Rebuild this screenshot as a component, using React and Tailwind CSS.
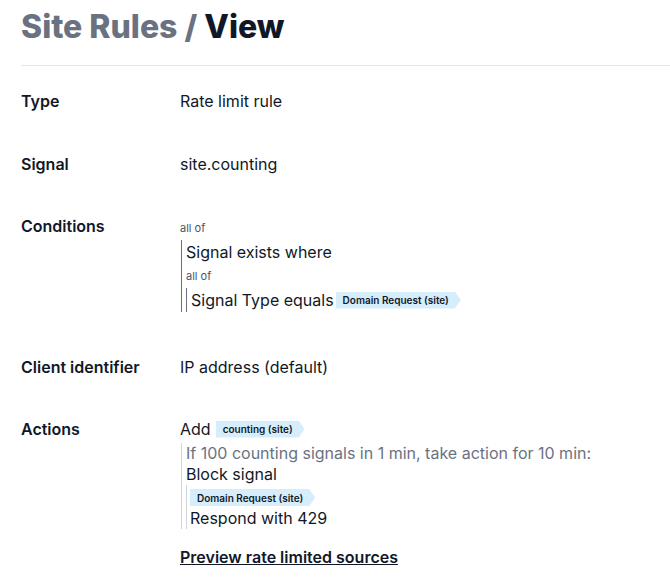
import React from 'react';

const Tag = ({ children }) => (
    <span className="inline-flex items-center h-[17px] pl-[7px] pr-[12px] bg-[#d6eefb] text-[10px] font-semibold text-gray-900 leading-none [clip-path:polygon(0_0,calc(100%-6px)_0,100%_50%,calc(100%-6px)_100%,0_100%)]">
        {children}
    </span>
);

const Row = ({ label, className = '', children }) => (
    <div className={`flex ${className}`}>
        <div className="w-[159px] shrink-0 font-semibold text-gray-900 leading-[24px]">{label}</div>
        <div className="flex-1 text-gray-900">{children}</div>
    </div>
);

const App = () => {
    return (
        <div className="min-h-screen bg-white pl-[21px] font-['Inter',sans-serif] text-[16px]">
            {/* Header */}
            <h1 className="pt-[7px] text-[32px] leading-[40px] font-extrabold">
                <span className="text-gray-500">Site Rules / </span>
                <span className="text-gray-900">View</span>
            </h1>
            <hr className="mt-[18px] border-gray-200" />

            <Row label="Type" className="mt-[23px]">
                <div className="leading-[24px]">Rate limit rule</div>
            </Row>

            <Row label="Signal" className="mt-[39px]">
                <div className="leading-[24px]">site.counting</div>
            </Row>

            <Row label="Conditions" className="mt-[38px]">
                <div className="pt-[3px] text-[11px] leading-[23px] text-gray-600">all of</div>
                <div className="ml-px border-l border-gray-500 pl-[4px]">
                    <div className="leading-[24px]">Signal exists where</div>
                    <div className="mt-[3px] text-[11px] leading-[18px] text-gray-600">all of</div>
                    <div className="mt-[3px] border-l border-gray-500 pl-[4px]">
                        <div className="flex items-center gap-[2px] leading-[24px]">
                            <span>Signal Type equals</span>
                            <Tag>Domain Request (site)</Tag>
                        </div>
                    </div>
                </div>
            </Row>

            <Row label="Client identifier" className="mt-[43px]">
                <div className="leading-[24px]">IP address (default)</div>
            </Row>

            <Row label="Actions" className="mt-[38px]">
                <div className="flex items-center gap-[5px] leading-[24px]">
                    <span>Add</span>
                    <Tag>counting (site)</Tag>
                </div>
                <div className="ml-px border-l border-gray-300 pl-[4px]">
                    <div className="mt-[2px] leading-[20px] text-gray-500">If 100 counting signals in 1 min, take action for 10 min:</div>
                    <div className="leading-[22px]">Block signal</div>
                    <div className="flex flex-col items-start border-l border-gray-300 pl-[3px] pt-[4px]">
                        <Tag>Domain Request (site)</Tag>
                        <div className="mt-px leading-[22px]">Respond with 429</div>
                    </div>
                </div>
                <a href="#" className="mt-[16px] inline-block font-semibold underline leading-[24px] text-gray-900">
                    Preview rate limited sources
                </a>
            </Row>
        </div>
    );
};

export default App;
